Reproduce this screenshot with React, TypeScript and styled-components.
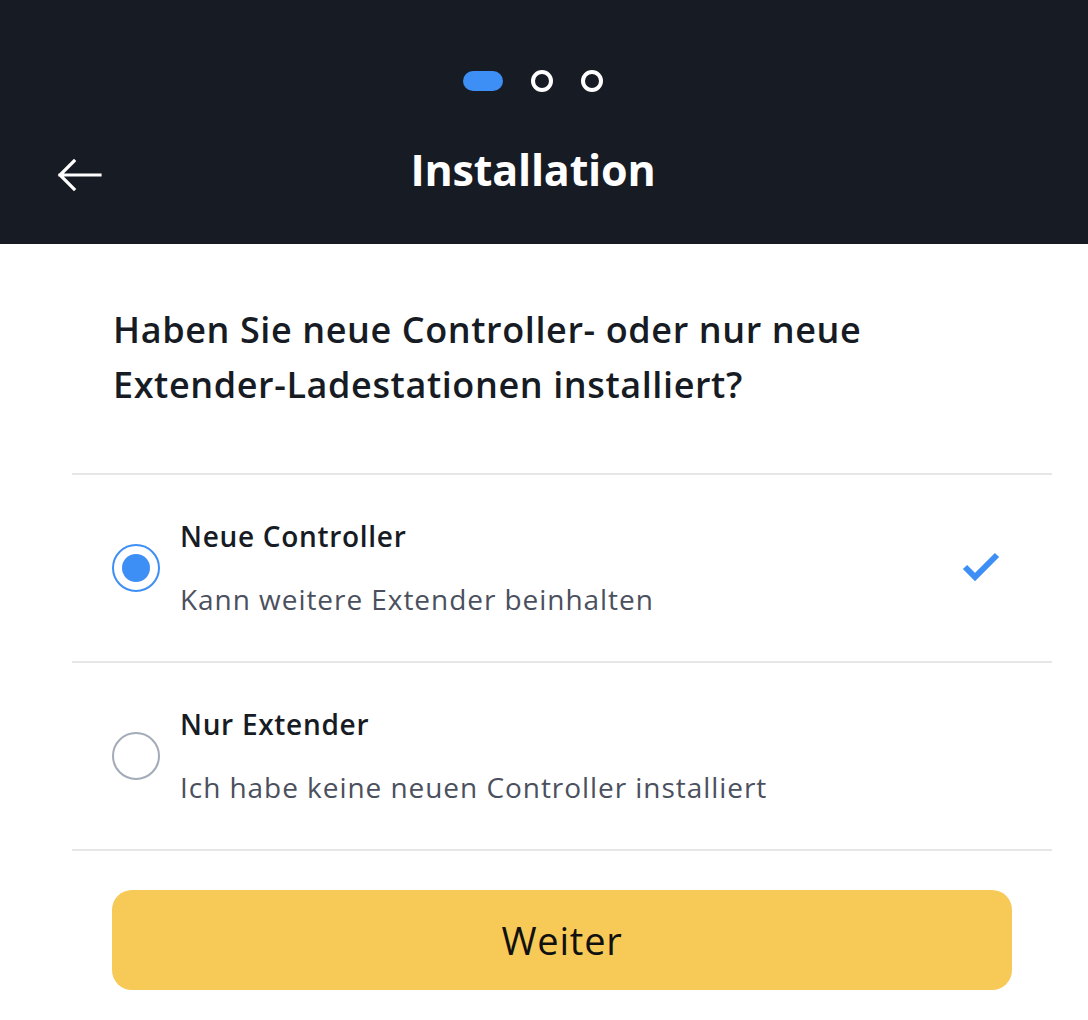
import React from "react";
import styled, { createGlobalStyle } from "styled-components";

const Global = createGlobalStyle`
  html, body { margin: 0; padding: 0; background: #ffffff; }
  body { font-family: "Open Sans", "Noto Sans", sans-serif; -webkit-font-smoothing: antialiased; }
  * { box-sizing: border-box; }
`;

const Page = styled.div`
  width: 1088px;
  min-height: 1020px;
  background: #ffffff;
`;

const Header = styled.header`
  height: 244px;
  background: #171b24;
  display: flex;
  flex-direction: column;
  padding-right: 22px;
`;

const Steps = styled.div`
  display: flex;
  justify-content: center;
  align-items: center;
  gap: 28px;
  margin-top: 70px;
  height: 22px;
`;

const StepPill = styled.span`
  width: 40px;
  height: 20px;
  border-radius: 10px;
  background: #3d8ff5;
`;

const StepDot = styled.span`
  width: 22px;
  height: 22px;
  border-radius: 50%;
  border: 4px solid #ffffff;
`;

const TitleBar = styled.div`
  display: grid;
  grid-template-columns: 120px 1fr 120px;
  align-items: center;
  margin-top: 54px;
  height: 48px;
`;

const BackButton = styled.button`
  background: none;
  border: none;
  padding: 0 0 0 56px;
  display: flex;
  align-items: center;
  cursor: pointer;
  margin-top: 10px;
`;

const Title = styled.h1`
  margin: 0;
  text-align: center;
  color: #ffffff;
  font-size: 43px;
  font-weight: 700;
  letter-spacing: -0.2px;
  line-height: 48px;
`;

const Content = styled.main`
  padding: 0 36px 0 72px;
`;

const Question = styled.h2`
  margin: 58px 0 61px;
  padding: 0 41px;
  max-width: 880px;
  font-size: 36px;
  font-weight: 600;
  letter-spacing: 0.6px;
  line-height: 55px;
  color: #171b24;
`;

const Options = styled.div`
  display: flex;
  flex-direction: column;
  border-top: 2px solid #e6e6e8;
`;

const Option = styled.label`
  display: flex;
  align-items: center;
  padding: 41px 50px 42px 40px;
  border-bottom: 2px solid #e6e6e8;
  cursor: pointer;
`;

const Radio = styled.span<{ $checked: boolean }>`
  flex: none;
  width: 48px;
  height: 48px;
  border-radius: 50%;
  border: 2px solid ${(p) => (p.$checked ? "#3d8ff5" : "#a3aab8")};
  display: flex;
  align-items: center;
  justify-content: center;
  margin-right: 20px;
  &::after {
    content: "";
    width: 28px;
    height: 28px;
    border-radius: 50%;
    background: ${(p) => (p.$checked ? "#3d8ff5" : "transparent")};
  }
`;

const OptionText = styled.div`
  flex: 1;
  display: flex;
  flex-direction: column;
  gap: 23px;
`;

const OptionTitle = styled.span`
  font-size: 28px;
  font-weight: 600;
  letter-spacing: 0.7px;
  line-height: 40px;
  color: #171b24;
`;

const OptionSub = styled.span`
  font-size: 28px;
  font-weight: 400;
  letter-spacing: 0.95px;
  line-height: 40px;
  color: #4b505e;
`;

const Check = styled.svg`
  flex: none;
  width: 40px;
  height: 40px;
`;

const Footer = styled.div`
  padding: 39px 40px 0;
`;

const Primary = styled.button`
  width: 900px;
  height: 100px;
  border: none;
  border-radius: 20px;
  background: #f7ca57;
  color: #111111;
  font-family: inherit;
  font-size: 38px;
  font-weight: 400;
  letter-spacing: 0.8px;
  cursor: pointer;
`;

const options = [
  { title: "Neue Controller", sub: "Kann weitere Extender beinhalten", checked: true },
  { title: "Nur Extender", sub: "Ich habe keine neuen Controller installiert", checked: false },
];

export default function App() {
  return (
    <Page>
      <Global />
      <Header>
        <Steps>
          <StepPill />
          <StepDot />
          <StepDot />
        </Steps>
        <TitleBar>
          <BackButton aria-label="Zurück">
            <svg width="46" height="34" viewBox="0 0 46 34" fill="none">
              <path d="M44 17H4M18 3L4 17l14 14" stroke="#ffffff" strokeWidth="3.2" strokeLinecap="square" />
            </svg>
          </BackButton>
          <Title>Installation</Title>
          <span />
        </TitleBar>
      </Header>
      <Content>
        <Question>
          Haben Sie neue Controller- oder nur neue Extender-Ladestationen installiert?
        </Question>
        <Options>
          {options.map((o) => (
            <Option key={o.title}>
              <Radio $checked={o.checked} />
              <OptionText>
                <OptionTitle>{o.title}</OptionTitle>
                <OptionSub>{o.sub}</OptionSub>
              </OptionText>
              {o.checked && (
                <Check viewBox="0 0 40 40">
                  <path d="M3 19l10 10L35 7" stroke="#3d8ff5" strokeWidth="6" fill="none" />
                </Check>
              )}
            </Option>
          ))}
        </Options>
        <Footer>
          <Primary>Weiter</Primary>
        </Footer>
      </Content>
    </Page>
  );
}
